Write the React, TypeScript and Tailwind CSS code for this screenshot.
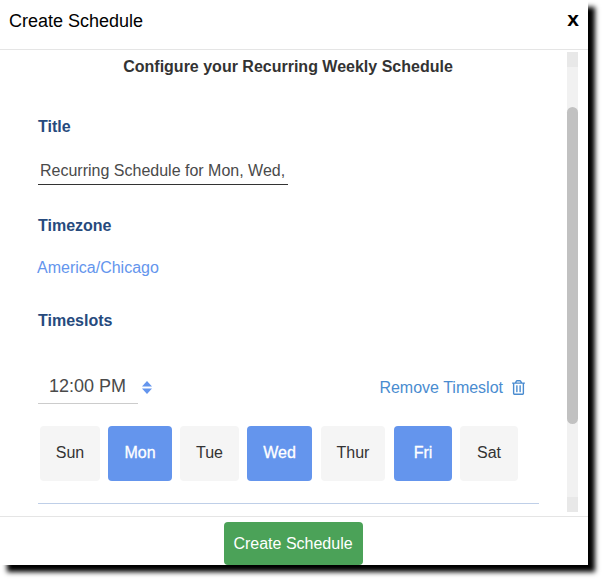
import React from 'react';
import { FaRegTrashAlt } from 'react-icons/fa';

const DAYS = [
  { label: 'Sun', className: 'w-[60px]', active: false },
  { label: 'Mon', className: 'w-[64px]', active: true },
  { label: 'Tue', className: 'w-[59px]', active: false },
  { label: 'Wed', className: 'w-[65px]', active: true },
  { label: 'Thur', className: 'w-[64px] ml-px', active: false },
  { label: 'Fri', className: 'w-[58px] ml-px', active: true },
  { label: 'Sat', className: 'w-[58px]', active: false },
];

export default function App() {
  return (
    <div className="w-[604px] h-[582px] bg-white font-['Liberation_Sans',Arial,sans-serif]">
      <div className="w-[588px] h-[565px] flex flex-col bg-white shadow-[7px_7px_5px_#000000]">
        {/* Header */}
        <div className="h-[50px] shrink-0 flex items-center justify-between pl-[9px] pr-[9px] pb-[7px] border-b border-[#e5e5e5]">
          <span className="text-[18px] text-black">Create Schedule</span>
          <span className="text-[21px] font-bold text-black leading-[21px] mb-[5px]">x</span>
        </div>

        {/* Body */}
        <div className="flex-1 flex min-h-0">
          <div className="flex-1 min-w-0 pl-[38px] pr-[28px]">
            <div className="text-center text-[16px] font-bold text-[#333333] leading-[18px] mt-[8px] pr-[1px]">
              Configure your Recurring Weekly Schedule
            </div>

            <div className="mt-[42px] text-[16px] font-bold text-[#264a7d] leading-[18px]">Title</div>
            <div className="mt-[21px] w-[250px] h-[28px] border-b border-[#333333] pl-[2px] pt-[3px] text-[16px] text-[#4a4a4a] leading-[22px] overflow-hidden whitespace-nowrap">
              Recurring Schedule for Mon, Wed,
            </div>

            <div className="mt-[32px] text-[16px] font-bold text-[#264a7d] leading-[18px]">Timezone</div>
            <div className="mt-[24px] -ml-px text-[16px] text-[#6495ed] leading-[18px]">America/Chicago</div>

            <div className="mt-[35px] text-[16px] font-bold text-[#264a7d] leading-[18px]">Timeslots</div>

            <div className="mt-[40px] flex items-center justify-between pr-[14px]">
              <div className="flex items-center">
                <div className="w-[100px] h-[34px] border-b border-[#cccccc] pl-[11px] text-[18px] text-[#4a4a4a] leading-[33px]">
                  12:00 PM
                </div>
                <svg viewBox="0 0 10 13" className="w-[10px] h-[13px] ml-[4px] fill-[#6495ed]">
                  <path d="M5 0 L10 5.5 H0 Z" />
                  <path d="M0 7.5 H10 L5 13 Z" />
                </svg>
              </div>
              <div className="flex items-center gap-[9px] pt-[2px] text-[16px] text-[#4a8cd0]">
                <span>Remove Timeslot</span>
                <FaRegTrashAlt className="w-[13px] h-[15px] mb-[2px]" />
              </div>
            </div>

            <div className="mt-[22px] ml-[2px] flex gap-[8px]">
              {DAYS.map((d) => (
                <div
                  key={d.label}
                  className={`${d.className} h-[55px] pb-px rounded-[4px] flex items-center justify-center text-[16px] ${
                    d.active ? 'bg-[#6495ed] text-white [-webkit-text-stroke:0.3px_white]' : 'bg-[#f5f5f5] text-[#333333]'
                  }`}
                >
                  {d.label}
                </div>
              ))}
            </div>

            <div className="mt-[22px] border-t border-[#bfcfe8]" />
          </div>

          {/* Scrollbar */}
          <div className="w-[11px] shrink-0 mt-[2px] mb-[4px] mr-[10px] flex flex-col bg-[#f1f1f1]">
            <div className="h-[15px] bg-[#e8e8e8]" />
            <div className="h-[40px]" />
            <div className="h-[317px] bg-[#c1c1c1] rounded-[6px]" />
            <div className="flex-1" />
            <div className="h-[15px] bg-[#e8e8e8]" />
          </div>
        </div>

        {/* Footer */}
        <div className="h-[49px] shrink-0 flex justify-center pt-[5px] pr-[2px] border-t border-[#e5e5e5]">
          <div className="w-[139px] h-[43px] rounded-[4px] bg-[#4ba258] text-white text-[16px] flex items-center justify-center">
            Create Schedule
          </div>
        </div>
      </div>
    </div>
  );
}
